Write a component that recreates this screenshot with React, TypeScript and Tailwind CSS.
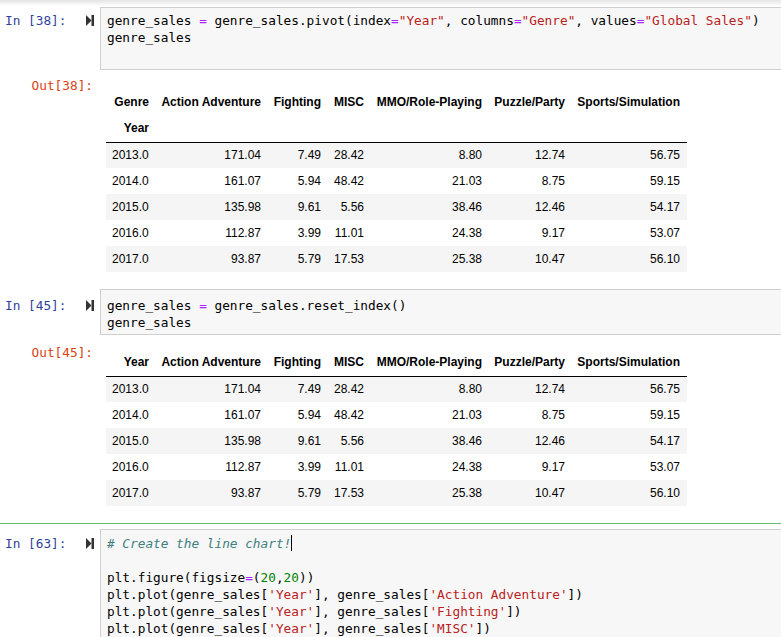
import React from "react";

const mono = { fontFamily: '"DejaVu Sans Mono", "Liberation Mono", monospace' };
const sans = { fontFamily: '"Liberation Sans", Arial, sans-serif' };

const genres = [
  "Action Adventure",
  "Fighting",
  "MISC",
  "MMO/Role-Playing",
  "Puzzle/Party",
  "Sports/Simulation",
];

const rows = [
  ["2013.0", "171.04", "7.49", "28.42", "8.80", "12.74", "56.75"],
  ["2014.0", "161.07", "5.94", "48.42", "21.03", "8.75", "59.15"],
  ["2015.0", "135.98", "9.61", "5.56", "38.46", "12.46", "54.17"],
  ["2016.0", "112.87", "3.99", "11.01", "24.38", "9.17", "53.07"],
  ["2017.0", "93.87", "5.79", "17.53", "25.38", "10.47", "56.10"],
];

const colWidths = ["w-[50px]", "w-[112px]", "w-[60px]", "w-[43px]", "w-[118px]", "w-[83px]", "w-[115px]"];

// token helpers for the syntax colours
const Op = ({ children }: { children: React.ReactNode }) => <span className="text-[#aa22ff]">{children}</span>;
const Str = ({ children }: { children: React.ReactNode }) => <span className="text-[#ba2121]">{children}</span>;
const Num = ({ children }: { children: React.ReactNode }) => <span className="text-[#008000]">{children}</span>;

const RunIcon = () => (
  <svg width="8" height="11" viewBox="0 0 8 11" className="block">
    <polygon points="0,0 5.5,5.5 0,11" fill="#333" />
    <rect x="5.5" y="0" width="2.5" height="11" fill="#333" />
  </svg>
);

interface InputCellProps {
  n: number;
  lines: React.ReactNode[];
  padTop: string;
  padBottom: string;
}

const InputCell = ({ n, lines, padTop, padBottom }: InputCellProps) => (
  <div className="flex" style={mono}>
    <div className={`w-[100px] shrink-0 flex justify-between pl-[5px] pr-[6px] ${padTop}`}>
      <span className="text-[12.75px] leading-[17px] mt-[1px] text-[#303f9f] whitespace-pre">{`In [${n}]:`}</span>
      <div className="mt-[4px]">
        <RunIcon />
      </div>
    </div>
    <div className={`flex-1 bg-[#f7f7f7] border border-r-0 border-[#cfcfcf] pl-[6px] ${padTop} ${padBottom}`}>
      {lines.map((line, i) => (
        <div key={i} className="text-[12.75px] leading-[17px] h-[17px] text-black whitespace-pre">
          {line}
        </div>
      ))}
    </div>
  </div>
);

const DataTable = ({ twoRowHeader }: { twoRowHeader: boolean }) => (
  <table className="table-fixed border-collapse text-[12px] text-black" style={sans}>
    <colgroup>
      {colWidths.map((w, i) => (
        <col key={i} className={w} />
      ))}
    </colgroup>
    <thead className="border-b border-black">
      <tr className="h-[26px]">
        <th className="text-right font-bold pr-[7px] pb-[2px]">{twoRowHeader ? "Genre" : "Year"}</th>
        {genres.map((g) => (
          <th key={g} className="text-right font-bold pr-[7px] pb-[2px] whitespace-nowrap">
            {g}
          </th>
        ))}
      </tr>
      {twoRowHeader && (
        <tr className="h-[26px]">
          <th className="text-right font-bold pr-[7px] pb-[2px]">Year</th>
          {genres.map((g) => (
            <th key={g}></th>
          ))}
        </tr>
      )}
    </thead>
    <tbody>
      {rows.map((r, i) => (
        <tr key={r[0]} className={`h-[26px] ${i % 2 === 0 ? "bg-[#f5f5f5]" : "bg-white"}`}>
          <td className="text-left pl-[6px]">{r[0]}</td>
          {r.slice(1).map((v, j) => (
            <td key={j} className="text-right pr-[7px]">
              {v}
            </td>
          ))}
        </tr>
      ))}
    </tbody>
  </table>
);

const OutputCell = ({ n, tableTop, twoRowHeader }: { n: number; tableTop: string; twoRowHeader: boolean }) => (
  <div className="flex">
    <div className="w-[100px] shrink-0 pr-[7px] text-right text-[12.75px] leading-[17px] text-[#d84315]" style={mono}>
      {`Out[${n}]:`}
    </div>
    <div className={`pl-[6px] ${tableTop}`}>
      <DataTable twoRowHeader={twoRowHeader} />
    </div>
  </div>
);

export default function App() {
  return (
    <div className="w-[781px] h-[637px] overflow-hidden bg-white">
      <div className="h-[6px] bg-gradient-to-b from-[#e4e4e4] to-white" />

      {/* In [38] */}
      <div className="mt-[1px]">
        <InputCell
          n={38}
          padTop="pt-[4px]"
          padBottom="pb-[6px]"
          lines={[
            <>
              genre_sales <Op>=</Op> genre_sales.pivot(index<Op>=</Op>
              <Str>"Year"</Str>, columns<Op>=</Op>
              <Str>"Genre"</Str>, values<Op>=</Op>
              <Str>"Global Sales"</Str>)
            </>,
            "genre_sales",
            "",
          ]}
        />
      </div>

      <div className="mt-[7px]">
        <OutputCell n={38} tableTop="pt-[13px]" twoRowHeader={true} />
      </div>

      {/* In [45] */}
      <div className="mt-[17px]">
        <InputCell
          n={45}
          padTop="pt-[7px]"
          padBottom="pb-[3px]"
          lines={[
            <>
              genre_sales <Op>=</Op> genre_sales.reset_index()
            </>,
            "genre_sales",
          ]}
        />
      </div>

      <div className="mt-[9px]">
        <OutputCell n={45} tableTop="pt-[6px]" twoRowHeader={false} />
      </div>

      {/* In [63], selected cell in edit mode */}
      <div className="mt-[17px] border-t border-[#66bb6a] pt-[5px]">
        <InputCell
          n={63}
          padTop="pt-[5px]"
          padBottom="pb-[6px]"
          lines={[
            <>
              <span className="italic text-[#408080]"># Create the line chart!</span>
              <span className="inline-block w-[1px] h-[16px] bg-black align-[-3px]" />
            </>,
            "",
            <>
              plt.figure(figsize<Op>=</Op>(<Num>20</Num>,<Num>20</Num>))
            </>,
            <>
              plt.plot(genre_sales[<Str>'Year'</Str>], genre_sales[<Str>'Action Adventure'</Str>])
            </>,
            <>
              plt.plot(genre_sales[<Str>'Year'</Str>], genre_sales[<Str>'Fighting'</Str>])
            </>,
            <>
              plt.plot(genre_sales[<Str>'Year'</Str>], genre_sales[<Str>'MISC'</Str>])
            </>,
            "",
          ]}
        />
      </div>
    </div>
  );
}
